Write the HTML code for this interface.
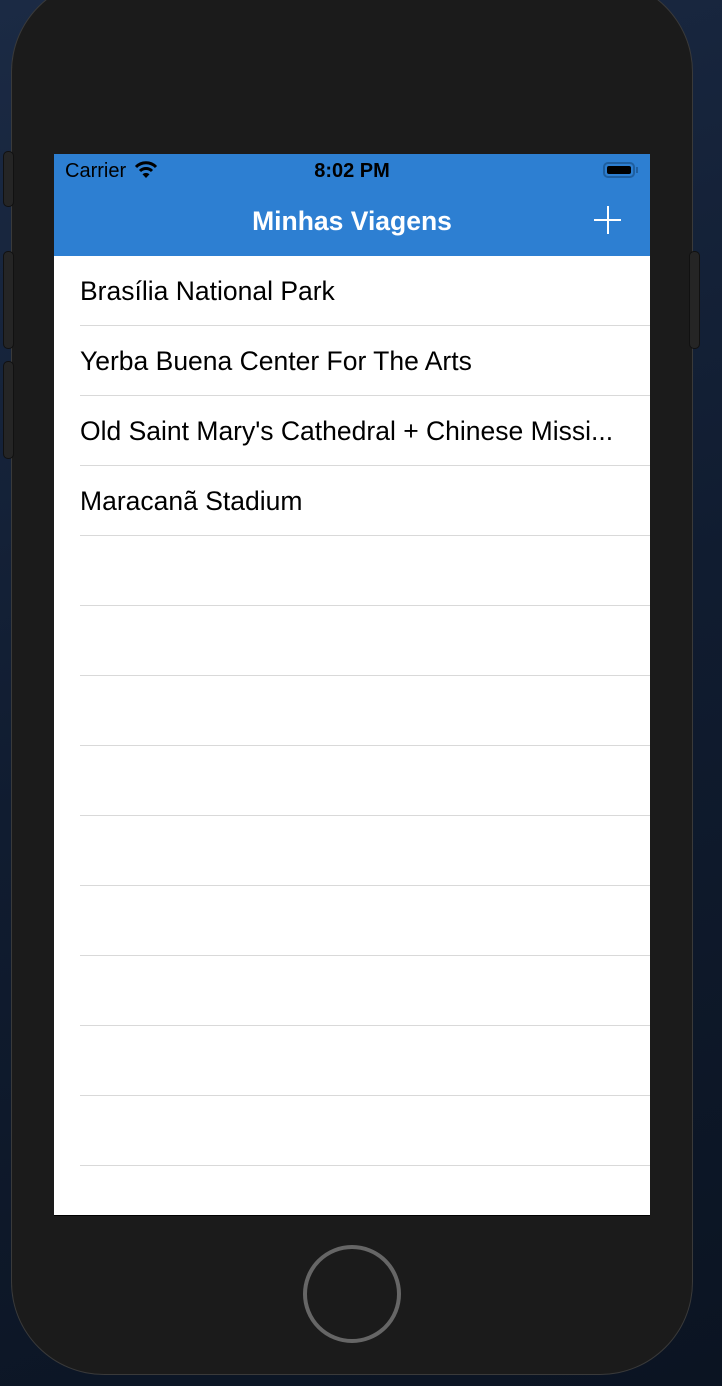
<!DOCTYPE html>
<html><head><meta charset="utf-8"><style>
html,body{margin:0;padding:0}
body{width:722px;height:1386px;position:relative;overflow:hidden;background:linear-gradient(160deg,#1b2a44 0%,#101c30 50%,#0b1422 100%);font-family:"Liberation Sans",sans-serif}
.phone{position:absolute;left:12px;top:-20px;width:680px;height:1394px;background:#1b1b1b;border-radius:92px;box-shadow:0 0 0 1px #3a3a3a}
.btn{position:absolute;background:#252525;border-radius:4px;box-shadow:0 0 0 1px #111}
.screen{position:absolute;left:54px;top:154px;width:596px;height:1062px;background:#fff;overflow:hidden;border-bottom:1px solid #000;box-sizing:border-box}
.bar{position:absolute;left:0;top:0;width:100%;height:102px;background:#2d7fd2}
.status{position:absolute;top:6px;font-size:20px;color:#000}
.title{position:absolute;left:0;width:100%;top:52px;text-align:center;color:#fff;font-size:26.5px;font-weight:bold}
.row{position:absolute;left:26px;right:0;height:70px;border-bottom:1px solid #d9d9d9;font-size:26.5px;line-height:70px;color:#000;white-space:nowrap;box-sizing:border-box}
.home{position:absolute;left:303px;top:1245px;width:90px;height:90px;border:4px solid #666;border-radius:50%}
</style></head><body>
<div class="phone"></div>
<div class="btn" style="left:4px;top:152px;width:9px;height:54px"></div>
<div class="btn" style="left:4px;top:252px;width:9px;height:96px"></div>
<div class="btn" style="left:4px;top:362px;width:9px;height:96px"></div>
<div class="btn" style="left:690px;top:252px;width:9px;height:96px"></div>
<div class="screen">
 <div class="bar">
  <div class="status" style="left:11px">Carrier</div>
  <svg style="position:absolute;left:80px;top:7px" width="24" height="18" viewBox="0 0 24 18">
   <path d="M2 6 A14 14 0 0 1 22 6" stroke="#000" stroke-width="3" fill="none"/>
   <path d="M6 10 A8.5 8.5 0 0 1 18 10" stroke="#000" stroke-width="3" fill="none"/>
   <path d="M12 17 L8.5 13.3 A5 5 0 0 1 15.5 13.3 Z" fill="#000"/>
  </svg>
  <div class="status" style="left:0;width:100%;text-align:center;font-weight:bold">8:02 PM</div>
  <div style="position:absolute;left:549px;top:8px;width:32px;height:16px;border:2px solid #1f5fa0;border-radius:5px;box-sizing:border-box;padding:2px"><div style="background:#000;width:100%;height:100%;border-radius:2px"></div></div>
  <div style="position:absolute;left:582px;top:13px;width:2px;height:6px;background:#1f5fa0"></div>
  <div class="title">Minhas Viagens</div>
  <div style="position:absolute;left:540px;top:65px;width:27px;height:2px;background:#fff"></div>
  <div style="position:absolute;left:553px;top:52px;width:2px;height:28px;background:#fff"></div>
 </div>
 <div class="row" style="top:102px">Brasília National Park</div>
 <div class="row" style="top:172px">Yerba Buena Center For The Arts</div>
 <div class="row" style="top:242px">Old Saint Mary's Cathedral + Chinese Missi...</div>
 <div class="row" style="top:312px">Maracanã Stadium</div>
 <div class="row" style="top:382px"></div>
 <div class="row" style="top:452px"></div>
 <div class="row" style="top:522px"></div>
 <div class="row" style="top:592px"></div>
 <div class="row" style="top:662px"></div>
 <div class="row" style="top:732px"></div>
 <div class="row" style="top:802px"></div>
 <div class="row" style="top:872px"></div>
 <div class="row" style="top:942px"></div>
</div>
<div class="home"></div>
</body></html>
